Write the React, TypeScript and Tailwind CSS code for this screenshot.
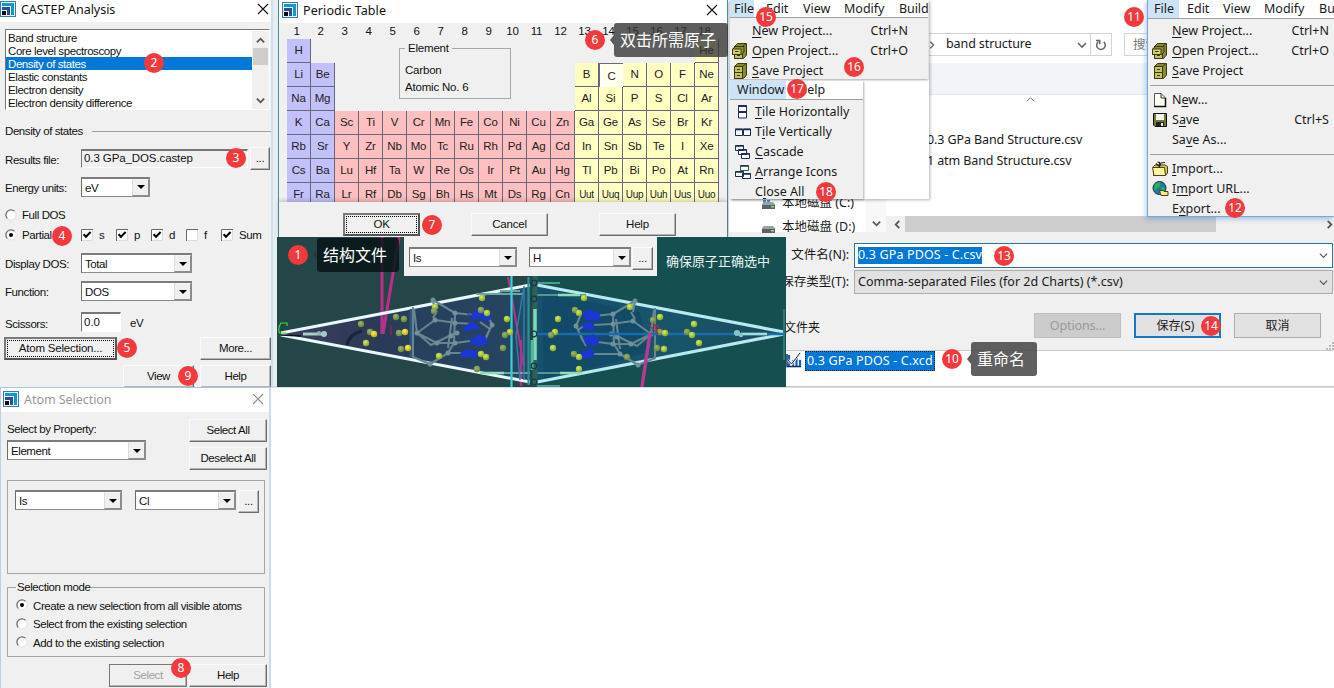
import React from "react";
import clsx from "clsx";

const UI = "font-[family-name:'Noto_Sans','Noto_Sans_CJK_SC',sans-serif]";
const CLASSIC = "font-[family-name:'Liberation_Sans','Noto_Sans_CJK_SC',sans-serif]";

function AppIcon() {
  return (
    <svg width="16" height="16" viewBox="0 0 16 16" className="shrink-0">
      <rect x="0.5" y="0.5" width="15" height="15" fill="#eaf4fa" stroke="#3a7ca5" />
      <path d="M2 2H14V14H11V5H2Z" fill="#1496cf" />
      <path d="M2 6H10V14H7V9H2Z" fill="#2b4f93" />
      <rect x="2" y="10" width="4" height="4" fill="#0a0a14" />
    </svg>
  );
}

function CloseIcon({ color }: { color: string }) {
  return (
    <svg width="12" height="12" viewBox="0 0 12 12" className="shrink-0">
      <path d="M1 1L11 11M11 1L1 11" stroke={color} strokeWidth="1.1" />
    </svg>
  );
}

function Chevron({ dir, color = "#555", size = 9, w = 1.6 }: { dir: "up" | "down" | "left" | "right"; color?: string; size?: number; w?: number }) {
  const d = { up: "M1 7L5 3L9 7", down: "M1 3L5 7L9 3", left: "M7 1L3 5L7 9", right: "M3 1L7 5L3 9" }[dir];
  return (
    <svg width={size} height={size} viewBox="0 0 10 10" className="shrink-0">
      <path d={d} fill="none" stroke={color} strokeWidth={w} />
    </svg>
  );
}

function Combo({ value, className }: { value: string; className: string }) {
  return (
    <div className={clsx("flex h-5 shrink-0 border border-t-2 border-[#8c8c8c] border-l-[#6c6c6c] border-t-[#7c7c7c] bg-white", className)}>
      <span className="min-w-0 flex-1 overflow-hidden pl-[3px] pt-px leading-4">{value}</span>
      <span className="flex w-[17px] items-center justify-center border border-b-[#8c8c8c] border-l-[#dcdcdc] border-r-[#8c8c8c] border-t-[#f4f4f4] bg-[#f0f0f0]">
        <svg width="8" height="4" viewBox="0 0 8 4">
          <path d="M0 0H8L4 4Z" fill="#000" />
        </svg>
      </span>
    </div>
  );
}

function Button({ children, className, focus = false, disabled = false }: { children: React.ReactNode; className: string; focus?: boolean; disabled?: boolean }) {
  return (
    <div
      className={clsx(
        "flex h-[23px] shrink-0 bg-[#f0f0f0]",
        focus
          ? "border-2 border-b-[#555] border-l-[#7a7a7a] border-r-[#555] border-t-[#7a7a7a] p-px"
          : "border p-0.5 shadow-[inset_-1px_-1px_0_#b4b4b4]",
        !focus && !disabled && "border-b-[#6c6c6c] border-l-[#fbfbfb] border-r-[#6c6c6c] border-t-[#fbfbfb]",
        disabled && "border-[#777] text-[#a0a0a0]",
        className,
      )}
    >
      <span className={clsx("flex flex-1 items-center justify-center whitespace-nowrap", focus && "border border-dotted border-black")}>{children}</span>
    </div>
  );
}

function Radio({ on = false }: { on?: boolean }) {
  return (
    <svg width="12" height="12" viewBox="0 0 12 12" className="shrink-0">
      <circle cx="6" cy="6" r="5" fill="#fff" />
      <path d="M2.4 9.6A5 5 0 0 1 9.6 2.4" fill="none" stroke="#6c6c6c" strokeWidth="1.3" />
      <path d="M9.6 2.4A5 5 0 0 1 2.4 9.6" fill="none" stroke="#e2e2e2" />
      {on && <circle cx="6" cy="6" r="2" fill="#000" />}
    </svg>
  );
}

function Check({ label, on = true, className }: { label: string; on?: boolean; className: string }) {
  return (
    <div className={clsx("flex shrink-0 items-center", className)}>
      <svg width="12" height="12" viewBox="0 0 12 12" className="shrink-0">
        <rect width="12" height="12" fill="#fff" />
        <path d="M0.5 12V0.5H12" fill="none" stroke="#6a6a6a" />
        <path d="M11.5 1V11.5H1" fill="none" stroke="#dcdcdc" />
        {on && <path d="M2.6 5.2L5 7.8L9.6 3" fill="none" stroke="#000" strokeWidth="2" />}
      </svg>
      <span className="pl-[6px]">{label}</span>
    </div>
  );
}

function Badge({ n, className }: { n: number; className: string }) {
  return (
    <div className={clsx("absolute flex size-5 items-center justify-center rounded-full bg-[#f23a3c] text-[12px] leading-none text-white", UI, className)}>
      {n}
    </div>
  );
}

function CastepWindow() {
  const items = ["Band structure", "Core level spectroscopy", "Density of states", "Elastic constants", "Electron density", "Electron density difference"];
  return (
    <section className={clsx("absolute left-0 top-0 flex h-[387px] w-[271px] flex-col bg-[#f0f0f0] text-[11.5px] leading-[13px] tracking-[-0.42px] text-[#111]", CLASSIC)}>
      <header className="flex h-[22px] shrink-0 items-center bg-white pb-1 pr-[2px]">
        <AppIcon />
        <span className={clsx("flex-1 pl-[5px] text-[12.5px] tracking-[-0.05px]", UI)}>CASTEP Analysis</span>
        <CloseIcon color="#111" />
      </header>
      <div className="ml-[5px] mt-[7px] flex h-[81px] w-[265px] border border-b-[#fff] border-l-[#777] border-r-[#fff] border-t-[#777] bg-white pt-px">
        <ul className="flex-1">
          {items.map((t) => (
            <li key={t} className={clsx("h-[13px] whitespace-nowrap pl-[2px] leading-[14px]", t === "Density of states" && "bg-[#0078d7] text-white")}>
              {t}
            </li>
          ))}
        </ul>
        <div className="flex w-[17px] flex-col items-center bg-[#f0f0f0] pt-[5px]">
          <Chevron dir="up" w={2} />
          <div className="mt-[3px] h-[17px] w-[15px] bg-[#cdcdcd]" />
          <div className="flex-1" />
          <Chevron dir="down" w={2} />
          <div className="h-1" />
        </div>
      </div>
      <div className="mt-[14px] flex h-4 items-center pl-[5px]">
        <span>Density of states</span>
        <div className="ml-[9px] h-px flex-1 bg-[#a0a0a0]" />
      </div>
      <div className="mt-[9px] flex h-5 items-center pl-[5px]">
        <span className="w-[76px] pt-[3px]">Results file:</span>
        <span className="h-[19px] w-[167px] border border-b-white border-l-[#777] border-r-white border-t-2 border-t-[#777] pl-[2px] pt-px tracking-[-0.1px]">0.3 GPa_DOS.castep</span>
        <Button className="ml-[2px] h-5 w-5">...</Button>
      </div>
      <div className="mt-[8px] flex h-5 items-center pl-[5px]">
        <span className="w-[76px] pt-[3px]">Energy units:</span>
        <Combo value="eV" className="w-[69px]" />
      </div>
      <div className="mt-[10px] flex h-4 items-center pl-[5px]">
        <Radio />
        <span className="pl-[5px] pt-px">Full DOS</span>
      </div>
      <div className="mt-[5px] flex h-4 items-center pl-[5px]">
        <Radio on />
        <span className="w-[64px] pl-[5px] pt-px">Partial</span>
        <Check label="s" className="w-[35px]" />
        <Check label="p" className="w-[35px]" />
        <Check label="d" className="w-[35px]" />
        <Check label="f" on={false} className="w-[35px]" />
        <Check label="Sum" className="w-[45px]" />
      </div>
      <div className="mt-[10px] flex h-5 items-center pl-[5px]">
        <span className="w-[76px] pt-[2px]">Display DOS:</span>
        <Combo value="Total" className="w-[111px]" />
      </div>
      <div className="mt-[8px] flex h-5 items-center pl-[5px]">
        <span className="w-[76px] pt-[2px]">Function:</span>
        <Combo value="DOS" className="w-[111px]" />
      </div>
      <div className="mt-[11px] flex h-5 items-center pl-[5px]">
        <span className="w-[76px] pt-1">Scissors:</span>
        <span className="h-5 w-10 border border-b-white border-l-[#777] border-r-white border-t-2 border-t-[#777] bg-white pl-0.5 pt-[2px] tracking-normal">0.0</span>
        <span className="pl-[9px] pt-0.5">eV</span>
      </div>
      <div className="mt-[5px] flex h-[22px] justify-between pl-1">
        <Button focus className="h-[22px] w-[113px] tracking-[-0.2px]">Atom Selection...</Button>
        <Button className="h-[22px] w-[71px]">More...</Button>
      </div>
      <div className="mt-[6px] flex h-[22px] justify-end gap-[6px]">
        <Button className="h-[22px] w-[71px]">View</Button>
        <Button className="h-[22px] w-[71px]">Help</Button>
      </div>
    </section>
  );
}

function AtomSelectionWindow() {
  const modes = ["Create a new selection from all visible atoms", "Select from the existing selection", "Add to the existing selection"];
  return (
    <section className={clsx("absolute left-0 top-[387px] flex h-[301px] w-[271px] flex-col border-l border-r-2 border-t border-l-[#b9cfe3] border-r-[#c9dced] border-t-[#a9c4dc] bg-[#f0f0f0] text-[11.5px] leading-[13px] tracking-[-0.42px] text-[#111]", CLASSIC)}>
      <header className="flex h-[24px] shrink-0 items-center bg-white pb-0.5 pl-[2px] pr-[5px]">
        <AppIcon />
        <span className={clsx("flex-1 pl-[5px] text-[12.5px] tracking-[-0.05px] text-[#999]", UI)}>Atom Selection</span>
        <CloseIcon color="#888" />
      </header>
      <div className="flex h-[68px] justify-between pl-[6px] pr-[2px] pt-[7px]">
        <div className="flex flex-col">
          <span className="pb-[4px] pt-[4px]">Select by Property:</span>
          <Combo value="Element" className="w-[139px]" />
        </div>
        <div className="flex flex-col gap-[5px]">
          <Button className="w-[78px]">Select All</Button>
          <Button className="w-[78px]">Deselect All</Button>
        </div>
      </div>
      <div className="ml-[6px] flex h-[94px] w-[258px] border border-[#a5a5a5] pl-[7px] pt-[9px]">
        <Combo value="Is" className="w-[107px]" />
        <Combo value="Cl" className="ml-[13px] w-[101px]" />
        <Button className="ml-[2px] h-[21px] w-[21px]">...</Button>
      </div>
      <fieldset className="ml-[6px] mt-[7px] flex h-[76px] w-[258px] flex-col border border-[#a5a5a5] pl-[8px]">
        <legend className="px-[1px]">Selection mode</legend>
        {modes.map((m, i) => (
          <label key={m} className="flex h-[18.5px] items-center whitespace-nowrap pt-[4px]">
            <Radio on={i === 0} />
            <span className="pl-[5px] pt-[2px]">{m}</span>
          </label>
        ))}
      </fieldset>
      <div className="mt-[7px] flex justify-end gap-[2px] pr-[2px]">
        <Button disabled className="w-[78px]">Select</Button>
        <Button className="w-[78px]">Help</Button>
      </div>
    </section>
  );
}

const ROWS: [number, string[]][] = [
  [1, ["H"]],
  [2, ["Li", "Be"]],
  [3, ["Na", "Mg"]],
  [4, "K Ca Sc Ti V Cr Mn Fe Co Ni Cu Zn Ga Ge As Se Br Kr".split(" ")],
  [5, "Rb Sr Y Zr Nb Mo Tc Ru Rh Pd Ag Cd In Sn Sb Te I Xe".split(" ")],
  [6, "Cs Ba Lu Hf Ta W Re Os Ir Pt Au Hg Tl Pb Bi Po At Rn".split(" ")],
  [7, "Fr Ra Lr Rf Db Sg Bh Hs Mt Ds Rg Cn Uut Uuq Uup Uuh Uus Uuo".split(" ")],
];
const RIGHT: [number, number, string[]][] = [
  [1, 18, ["He"]],
  [2, 13, "B C N O F Ne".split(" ")],
  [3, 13, "Al Si P S Cl Ar".split(" ")],
];

function Cell({ s, col, row }: { s: string; col: number; row: number }) {
  const kind = col <= 2 ? "bg-[#c3c1fb]" : col <= 12 ? "bg-[#fdbfc0]" : s === "C" ? "bg-[#fffff0]" : "bg-[#ffffc2]";
  return (
    <div
      style={{ gridColumn: col, gridRow: row }}
      className={clsx(
        "flex items-center justify-center text-[#221c24]",
        kind,
        s === "C" ? "border-l border-t border-[#686878] pt-px" : "border-b border-r border-[#686878]",
        s.length === 3 ? "text-[10px] tracking-[-0.3px]" : "text-[11.5px]",
      )}
    >
      {s}
    </div>
  );
}

function PeriodicWindow() {
  return (
    <section className={clsx("absolute left-[278px] top-0 flex h-[237px] w-[450px] flex-col border-l border-r border-[#4b8c94] bg-[#f0f0f0] text-[11.5px] leading-[13px] tracking-[-0.2px] text-[#111]", CLASSIC)}>
      <header className="flex h-[23px] shrink-0 items-center bg-white pb-[3px] pl-[3px] pr-[9px]">
        <AppIcon />
        <span className={clsx("flex-1 pl-[5px] text-[12.5px] tracking-[0.1px]", UI)}>Periodic Table</span>
        <CloseIcon color="#111" />
      </header>
      <div className="h-[179px] overflow-hidden pl-[8px]">
        <div className="flex h-4">
          {Array.from({ length: 18 }, (_, i) => (
            <span key={i} className="w-6 pr-[5px] pt-[2px] text-center">{i + 1}</span>
          ))}
        </div>
        <div className="grid grid-cols-[repeat(18,24px)] grid-rows-[repeat(7,24px)]">
          {ROWS.flatMap(([r, list]) => list.map((s, i) => <Cell key={s} s={s} col={i + 1} row={r} />))}
          {RIGHT.flatMap(([r, c, list]) => list.map((s, i) => <Cell key={s} s={s} col={c + i} row={r} />))}
          <fieldset className="col-span-6 col-start-5 row-span-3 row-start-1 ml-4 mt-[3px] h-[57px] w-[112px] border border-[#a8a8a8] pl-[5px]">
            <legend className="px-[3px]">Element</legend>
            <p className="pt-[9px]">Carbon</p>
            <p className="pt-1">Atomic No. 6</p>
          </fieldset>
        </div>
      </div>
      <footer className="flex h-[35px] gap-[51px] bg-[#f0f0f0] pl-[64px] pt-[11px] shadow-[0_-2px_4px_rgba(0,0,0,0.18)]">
        <Button focus className="w-[77px]">OK</Button>
        <Button className="w-[77px]">Cancel</Button>
        <Button className="w-[77px]">Help</Button>
      </footer>
    </section>
  );
}

const ATOMS_L = [[361, 324], [370, 332], [374, 334], [366, 343], [396, 317], [404, 319], [399, 333], [405, 332], [401, 349], [408, 348], [435, 307], [434, 311], [439, 356], [482, 298], [481, 310], [487, 313], [507, 319], [510, 332], [505, 335], [503, 348], [481, 354], [486, 357], [477, 369]];
const ATOMS_R = [[584, 298], [575, 310], [579, 313], [558, 319], [555, 332], [551, 335], [553, 348], [574, 354], [579, 357], [579, 369], [630, 307], [653, 320], [660, 317], [660, 332], [665, 333], [657, 348], [664, 349], [694, 324], [687, 332], [692, 335], [699, 343], [627, 357]];
const JOINTS = [[433, 300], [455, 313], [435, 320], [455, 323], [437, 343], [455, 343], [430, 364], [448, 353], [417, 333], [492, 325], [457, 333], [451, 336]];

function BondCage() {
  return (
    <g>
      <g fill="none" stroke="#66858f" strokeWidth="2.1" strokeLinejoin="round">
        <path d="M413 307V357L430 364L448 353H466L475 353" />
        <path d="M433 300L435 311M433 300L455 313L474 315M455 313L454 343L448 353" />
        <path d="M414 309L417 333L435 320L457 323L474 324" />
        <path d="M417 333L431 345L455 333M417 333L437 343L455 343L470 341" />
        <path d="M437 311L433 318M452 318L448 348M487 313L492 325L482 345M480 322L490 329L485 340" />
      </g>
      {JOINTS.map(([x, y], i) => (
        <circle key={i} cx={x} cy={y} r="2.5" fill="#71919a" />
      ))}
    </g>
  );
}

function StructureView() {
  return (
    <section className={clsx("absolute left-[277px] top-[237px] h-[150px] w-[509px] overflow-hidden", CLASSIC)}>
      <svg width="509" height="150" viewBox="277 237 509 150" className="absolute inset-0">
        <defs>
          <linearGradient id="inL" x1="0" x2="1">
            <stop offset="0" stopColor="#3d3d5a" />
            <stop offset="0.4" stopColor="#2a3a58" />
            <stop offset="1" stopColor="#244d66" />
          </linearGradient>
          <linearGradient id="inR" x1="0" x2="1">
            <stop offset="0" stopColor="#17506c" />
            <stop offset="0.5" stopColor="#17556c" />
            <stop offset="1" stopColor="#1c4c58" />
          </linearGradient>
          <radialGradient id="lime" cx="0.4" cy="0.35" r="0.65">
            <stop offset="0" stopColor="#d6ee5a" />
            <stop offset="1" stopColor="#86a82c" />
          </radialGradient>
          <radialGradient id="dim" cx="0.4" cy="0.35" r="0.65">
            <stop offset="0" stopColor="#9fb95a" />
            <stop offset="1" stopColor="#66834a" />
          </radialGradient>
          <radialGradient id="gold" cx="0.4" cy="0.35" r="0.65">
            <stop offset="0" stopColor="#fff04a" />
            <stop offset="1" stopColor="#bfae1c" />
          </radialGradient>
        </defs>
        <rect x="277" y="237" width="258" height="150" fill="#244648" />
        <rect x="535" y="237" width="251" height="150" fill="#164f50" />
        <path d="M281 332L530 285V383Z" fill="url(#inL)" />
        <path d="M784 333L536 285V383Z" fill="url(#inR)" />
        <path d="M413 309L470 299L520 288V378L470 366L413 355Z" fill="#27415f" opacity="0.6" />
        <path d="M542 292L580 300L640 312L648 352L600 366L544 378Z" fill="#114765" opacity="0.7" />
        <path d="M347 345Q349 334 362 331" stroke="#1b2336" strokeWidth="3" fill="none" />
        <g strokeWidth="3" stroke="#b83186" fill="none">
          <path d="M382 237V334M399 237L383 334" />
          <path d="M508 277L524 366" strokeWidth="2" />
          <path d="M521 340V386" strokeWidth="2.4" />
        </g>
        <path d="M391 325V335" stroke="#8c2a4c" strokeWidth="1.4" />
        <path d="M281 333L530 285M281 335L530 382" stroke="#eaf7fb" strokeWidth="3" />
        <path d="M784 332L537 285M784 334L537 382" stroke="#b9eaf2" strokeWidth="3.2" />
        <path d="M411 309V357" stroke="#2c5680" strokeWidth="3" />
        <BondCage />
        <g transform="translate(1068 1) scale(-1 1)">
          <BondCage />
        </g>
        <path d="M535 334H784" stroke="#1a6ab0" strokeWidth="2.6" />
        <g fill="#1c36d2">
          <path d="M466 313L471 315L476 310L485 310L492 318L488 322L480 318L474 320Z" />
          <path d="M463 328L470 322L478 324L479 331L474 329L466 332Z" />
          <path d="M468 337L473 339L478 334L486 337L488 344L480 346L472 344Z" />
          <path d="M460 353L466 349L478 351L476 358L468 357L462 358Z" />
          <path d="M582 313L590 309L600 314L599 321L586 320Z" />
          <path d="M582 324L590 321L595 326L592 331L583 329Z" />
          <path d="M583 338L593 334L600 340L596 346L586 345Z" />
          <path d="M580 353L590 348L595 353L591 358L581 358Z" />
        </g>
        <path d="M303 334H324" stroke="#a5cfc7" strokeWidth="3" />
        <circle cx="324" cy="334" r="3" fill="#a8c8c2" />
        <circle cx="319" cy="333" r="2" fill="#8eb3ad" />
        <path d="M287 326V323H281Q277.500 328 279.500 333H286" fill="none" stroke="#2fe02f" strokeWidth="1.2" />
        <path d="M281 335L301 336" stroke="#111" strokeWidth="1.4" />
        <path d="M476 294H524M480 373H530M500 291H520" stroke="#6da59c" strokeWidth="1.8" />
        <path d="M535 283H560M537 295H586M537 386H560M537 373H582" stroke="#4e9990" strokeWidth="1.8" />
        <path d="M558 295H580M560 373H582M480 373H504" stroke="#8be0b8" strokeWidth="2.4" />
        <path d="M511.5 237V387" stroke="#2fd3da" strokeWidth="2.2" />
        <path d="M524 286L516 335L520 380M524 286V380" stroke="#2684b0" strokeWidth="1.4" fill="none" />
        <path d="M528.5 277V385" stroke="#2b8f98" strokeWidth="2.2" />
        <path d="M535 276V386" stroke="#2a625d" strokeWidth="5" />
        <path d="M535 309V360" stroke="#7fd8bc" strokeWidth="3.5" />
        <path d="M532 340V370" stroke="#4fb69d" strokeWidth="3" />
        {[283, 299, 334, 366, 382].map((y) => (
          <circle key={y} cx="534" cy={y} r="2.8" fill="none" stroke="#183c44" strokeWidth="1.3" />
        ))}
        <path d="M741 334H767" stroke="#9fe0dc" strokeWidth="2.6" />
        <circle cx="737" cy="333" r="3" fill="#86c6c8" />
        <circle cx="741" cy="335" r="2.200" fill="#86c6c8" />
        {ATOMS_L.map(([x, y], i) => (
          <circle key={i} cx={x} cy={y} r="3.2" fill={[2, 7, 9].includes(i) ? "url(#gold)" : [0, 1, 4, 5, 6, 8, 11, 14, 18, 19, 22].includes(i) ? "url(#dim)" : "url(#lime)"} />
        ))}
        {ATOMS_R.map(([x, y], i) => (
          <circle key={i} cx={x} cy={y} r="3.2" fill={[1, 5, 7, 11, 13, 15, 18, 21].includes(i) ? "url(#dim)" : "url(#lime)"} />
        ))}
        <path d="M650 333L642 387" stroke="#bd3795" strokeWidth="3.4" />
        <path d="M649 325L658 334L654 324L663 330" stroke="#a0304a" strokeWidth="1.2" fill="none" />
        <path d="M784 309V360" stroke="#2d7a78" strokeWidth="2" />
      </svg>
      <div className="absolute left-[127px] top-0 flex h-[39px] w-[253px] bg-[#f0f0f0] pl-[5px] pt-[10px] text-[11.5px] tracking-[-0.35px] text-[#111]">
        <Combo value="Is" className="w-[108px]" />
        <Combo value="H" className="ml-3 w-[102px]" />
        <Button className="ml-[1px] h-[21px] w-[21px]">...</Button>
      </div>
      <p className={clsx("absolute left-[389px] top-[14px] whitespace-nowrap text-[13px] leading-[20px] text-[#e8f6f6]", UI)}>确保原子正确选中</p>
    </section>
  );
}

function CabinetIcon({ open = false }: { open?: boolean }) {
  return (
    <svg width="16" height="16" viewBox="0 0 16 16">
      <path d="M2.500 3.500L5.500 .5H14.500V12L11.500 15.500H2.500Z" fill="#8a8a35" stroke="#3a3a12" />
      <path d="M2.500 3.500H10.500V15.500H2.500ZM10.500 3.500L14 .5" fill="#c2c25e" stroke="#3a3a12" />
      <path d="M3 9.500H10M5 6.500H8M5 12.500H8" stroke="#3a3a12" />
      {open && (
        <>
          <path d="M.5 6L3.500 3.500H12V9L9.500 11.500H.5Z" fill="#8a8a35" stroke="#3a3a12" />
          <path d="M.5 6H9V11.500H.5Z" fill="#d0d06c" stroke="#3a3a12" />
          <path d="M3 8.500H6.500" stroke="#3a3a12" />
        </>
      )}
    </svg>
  );
}

const stroke = "#1c2c5a";
const icons: Record<string, React.ReactNode> = {
  open: <CabinetIcon open />,
  save: <CabinetIcon />,
  page: (
    <svg width="16" height="16" viewBox="0 0 16 16">
      <path d="M2.500 1.500H9L13.500 6V14.500H2.500Z" fill="#fffff0" stroke="#555" />
      <path d="M9 1.500V6H13.500" fill="none" stroke="#333" />
      <path d="M13.500 6V14.500H2" fill="none" stroke="#111" strokeWidth="1.500" />
    </svg>
  ),
  disk: (
    <svg width="16" height="16" viewBox="0 0 16 16">
      <path d="M1.500 1.500H14.500V14.500H3L1.500 13Z" fill="#77773b" stroke="#111" />
      <path d="M4 2H12V8H4Z" fill="#f4f4ea" />
      <path d="M4 10H12V14H4Z" fill="#222" />
      <path d="M9 11H11V14H9Z" fill="#eee" />
    </svg>
  ),
  folder: (
    <svg width="17" height="16" viewBox="0 0 17 16">
      <path d="M1.500 5.500L3 4H13L15.500 5.500V12L13.500 14.500H1.500Z" fill="#d6c85c" stroke="#4a4310" />
      <path d="M.5 6.500H12.500L13.500 14.500H2Z" fill="#fff3a0" stroke="#4a4310" />
      <path d="M4 2.500L7.500 5.500L9 2L13 1.500M7.500 5.500V1.500L5.500 1" fill="none" stroke="#222" strokeWidth="1.100" />
    </svg>
  ),
  globe: (
    <svg width="17" height="16" viewBox="0 0 17 16">
      <circle cx="7.500" cy="7" r="6.500" fill="#1b79ad" stroke="#12344a" />
      <path d="M3 3Q7 0 9 3Q8 6 5 7Q4 11 2 8ZM9 6Q13 5 13 8L10 10Z" fill="#2fb14b" />
      <path d="M7.500 9.500H11L12 10.500H16V14.500H9Z" fill="#f7ec82" stroke="#4a4310" />
    </svg>
  ),
  tileH: (
    <svg width="16" height="16" viewBox="0 0 16 16">
      <path d="M3.500 1.500H11.500V7.500H3.500ZM3.500 7.500H11.500V14H3.500Z" fill="#fff" stroke={stroke} />
      <path d="M3.500 2H11.500M3.500 8H11.500" stroke={stroke} strokeWidth="2" />
    </svg>
  ),
  tileV: (
    <svg width="16" height="16" viewBox="0 0 16 16">
      <path d="M.5 5H7.500V11.500H.5ZM8.500 5H15.500V11.500H8.500Z" fill="#fff" stroke={stroke} />
      <path d="M0 5.500H16" stroke={stroke} strokeWidth="1.600" />
    </svg>
  ),
  cascade: (
    <svg width="16" height="16" viewBox="0 0 16 16">
      <path d="M.5 1.500H8.500V6.500H.5ZM3.500 5.500H11.500V10.500H3.500ZM6.500 9.500H14.500V14.500H6.500Z" fill="#fff" stroke={stroke} />
      <path d="M.5 2H8.500M3.500 6H11.500M6.500 10H14.500" stroke={stroke} strokeWidth="1.600" />
    </svg>
  ),
  arrange: (
    <svg width="16" height="16" viewBox="0 0 16 16">
      <path d="M5.500 1.500H13.500V6.500H5.500Z" fill="#fff" stroke="#236b35" />
      <path d="M.5 7.500H8.500V12.500H.5ZM7.500 9.500H15.500V14.500H7.500Z" fill="#fff" stroke={stroke} />
      <path d="M.5 8H8.500M7.500 10H15.500M5.500 2H13.500" stroke={stroke} strokeWidth="1.400" />
    </svg>
  ),
};

function MenuItem({ icon, label, u = -1, keys }: { icon?: string; label: string; u?: number; keys?: string }) {
  return (
    <li className="flex h-5 items-center whitespace-nowrap">
      <span className="flex w-5 shrink-0">{icon && icons[icon]}</span>
      <span className="flex-1 leading-5">
        {u >= 0 ? (
          <>
            {label.slice(0, u)}
            <u className="underline-offset-2">{label[u]}</u>
            {label.slice(u + 1)}
          </>
        ) : (
          label
        )}
      </span>
      <span>{keys}</span>
    </li>
  );
}

function ProjectMenu() {
  return (
    <section className={clsx("absolute left-[730px] top-0 h-[199px] w-[199px] bg-white text-[12.5px] text-[#1a1a1a] shadow-[1px_1px_3px_rgba(0,0,0,0.3)]", UI)}>
      <div className="h-[79px] w-[198px] bg-[#f0f0f0] shadow-[0_1px_2px_rgba(0,0,0,0.35)]">
        <div className="flex h-[18px] overflow-hidden whitespace-nowrap border-b border-[#a0a0a0] bg-white leading-[17px]">
          <span className="w-[24px] shrink-0 bg-[#cce4f7] pl-1">File</span>
          <span className="w-[42px] shrink-0 pl-[12px]">Edit</span>
          <span className="w-[48px] shrink-0 pl-[7px]">View</span>
          <span className="w-[54px] shrink-0">Modify</span>
          <span className="pl-px tracking-[-0.1px]">Build</span>
        </div>
        <ul className="pl-[2px] pr-5 pt-[3px]">
          <MenuItem label="New Project..." u={0} keys="Ctrl+N" />
          <MenuItem icon="open" label="Open Project..." u={0} keys="Ctrl+O" />
          <MenuItem icon="save" label="Save Project" u={0} />
        </ul>
      </div>
      <div className="mt-[2px] h-[118px] w-[133px] overflow-hidden bg-[#f0f0f0] shadow-[1px_1px_2px_rgba(0,0,0,0.3)]">
        <div className="flex h-[19px] border-b border-[#a0a0a0] bg-white leading-[17px]">
          <span className="w-[56px] bg-[#cce4f7] pl-[7px]">Window</span>
          <span className="pl-[12px]">Help</span>
        </div>
        <ul className="pl-[5px] pt-[2px]">
          <MenuItem icon="tileH" label="Tile Horizontally" u={0} />
          <MenuItem icon="tileV" label="Tile Vertically" u={1} />
          <MenuItem icon="cascade" label="Cascade" u={0} />
          <MenuItem icon="arrange" label="Arrange Icons" u={0} />
          <MenuItem label="Close All" u={1} />
        </ul>
      </div>
    </section>
  );
}

function FileMenu() {
  return (
    <section className={clsx("absolute left-[1147px] top-0 h-[217px] w-[187px] overflow-hidden border-b border-l border-[#7da7cf] bg-[#f0f0f0] text-[12.5px] text-[#1a1a1a] shadow-[-1px_2px_5px_rgba(60,130,220,0.45)]", UI)}>
      <div className="flex h-[19px] overflow-hidden whitespace-nowrap border-b border-[#a0a0a0] bg-white leading-[17px]">
        <span className="w-[31px] shrink-0 bg-[#cce4f7] pl-[6px]">File</span>
        <span className="w-[36px] shrink-0 pl-[8px]">Edit</span>
        <span className="w-[49px] shrink-0 pl-[8px]">View</span>
        <span className="w-[55px] shrink-0">Modify</span>
        <span>Bu</span>
      </div>
      <ul className="pl-1 pr-[5px] pt-[2px]">
        <MenuItem label="New Project..." u={0} keys="Ctrl+N" />
        <MenuItem icon="open" label="Open Project..." u={0} keys="Ctrl+O" />
        <MenuItem icon="save" label="Save Project" u={0} />
        <li className="my-1 -ml-0.5 -mr-[5px] h-px bg-[#a0a0a0]" />
        <MenuItem icon="page" label="New..." u={1} />
        <MenuItem icon="disk" label="Save" u={1} keys="Ctrl+S" />
        <MenuItem label="Save As..." u={2} />
        <li className="my-1 -ml-0.5 -mr-[5px] h-px bg-[#a0a0a0]" />
        <MenuItem icon="folder" label="Import..." u={0} />
        <MenuItem icon="globe" label="Import URL..." u={1} />
        <MenuItem label="Export..." u={1} />
      </ul>
    </section>
  );
}

function Drive({ label, windows = false }: { label: string; windows?: boolean }) {
  return (
    <div className="flex h-[24px] items-center pl-[33px] leading-6">
      <svg width="20" height="16" viewBox="0 0 20 16" className="shrink-0">
        {windows && <path d="M1 1H4V4H1ZM5 1H8V4H5ZM1 5H4V8H1ZM5 5H8V8H5Z" fill="#25a7dc" />}
        <path d="M0 9L2 7H11L13 9V14H0Z" fill="#9ba1a5" />
        <path d="M0 10H13V14H0Z" fill="#5c6165" />
        <rect x="9" y="11" width="3" height="1.500" fill="#7ce07c" />
      </svg>
      <span>{label}</span>
    </div>
  );
}

function SaveDialog() {
  return (
    <section className={clsx("absolute left-[729px] top-0 flex h-[350px] w-[605px] flex-col bg-[#f0f0f0] text-[12.5px] text-[#1a1a1a] shadow-[0_1px_3px_rgba(0,0,0,0.35)]", UI)}>
      <div className="flex h-[63px] items-start bg-white pl-[190px] pt-[33px]">
        <div className="flex h-[23px] w-[193px] items-center border border-[#d4d4d4] pl-2">
          <Chevron dir="right" color="#666" size={8} />
          <span className="flex-1 pl-[10px] tracking-[-0.1px]">band structure</span>
          <Chevron dir="down" color="#666" size={10} />
          <span className="ml-[3px] flex h-full w-[21px] items-center justify-center border-l border-[#d4d4d4]">
            <svg width="12" height="12" viewBox="0 0 12 12">
              <path d="M3.500 2.600A4.300 4.300 0 1 0 8.800 2.900" fill="none" stroke="#666" strokeWidth="1.500" />
              <path d="M1 1.500H4.800V5.300" fill="none" stroke="#666" strokeWidth="1.400" />
            </svg>
          </span>
        </div>
        <div className="ml-[12px] h-[23px] flex-1 border border-[#d4d4d4] pl-[8px] leading-[21px] text-[#777]">搜索</div>
      </div>
      <div className="h-[32px] shrink-0 border-b border-[#dfe5ec] bg-[#f1f4f8]" />
      <div className="flex h-[137px] shrink-0">
        <div className="flex w-[157px] bg-white">
          <div className="flex flex-1 flex-col pt-[96px]">
            <Drive label="本地磁盘 (C:)" windows />
            <Drive label="本地磁盘 (D:)" />
          </div>
          <div className="flex w-[20px] flex-col items-center justify-end bg-[#f8f8f8] pb-1">
            <Chevron dir="down" w={2} />
          </div>
        </div>
        <div className="flex flex-1 flex-col">
          <div className="h-[121px] bg-white pl-[41px]">
            <div className="flex h-[4px] pl-[99px]">
              <Chevron dir="up" color="#666" w={1} />
            </div>
            <p className="pt-[30px] leading-[21px] tracking-[-0.1px]">0.3 GPa Band Structure.csv</p>
            <p className="leading-[21px] tracking-[-0.1px]">1 atm Band Structure.csv</p>
          </div>
          <div className="flex h-4 shrink-0 items-center justify-between pl-[7px]">
            <Chevron dir="left" w={2} />
            <div className="ml-[3px] h-full w-[311px] bg-[#cdcdcd]" />
            <div className="flex-1" />
            <Chevron dir="right" w={2} />
          </div>
        </div>
      </div>
      <div className="mt-[11px] flex h-[25px] items-center pr-px">
        <span className="w-[125px] pr-[5px] text-right">文件名(N):</span>
        <div className="flex h-full flex-1 items-center border border-[#24789a] bg-white pl-[3px] pr-1">
          <span className="h-[17px] bg-[#0078d7] leading-[16px] tracking-[0.14px] text-white">0.3 GPa PDOS - C.csv</span>
          <span className="flex-1" />
          <Chevron dir="down" w={1.3} />
        </div>
      </div>
      <div className="mt-[2px] flex h-[24px] items-center pr-px">
        <span className="w-[125px] whitespace-nowrap pr-[5px] text-right">保存类型(T):</span>
        <div className="flex h-full flex-1 items-center border border-[#acacac] bg-[#e1e1e1] pl-[3px] pr-1">
          <span className="flex-1 pt-px">Comma-separated Files (for 2d Charts) (*.csv)</span>
          <Chevron dir="down" w={1.3} />
        </div>
      </div>
      <div className="mt-[19px] flex h-[25px] items-center gap-[13px] pr-[13px]">
        <span className="flex-1 pl-[55px] pt-1 text-[12px]">文件夹</span>
        <span className="flex h-full w-[87px] items-center justify-center border border-[#bfbfbf] bg-[#cccccc] pt-px tracking-[-0.1px] text-[#9a9a9a]">Options...</span>
        <span className="flex h-full w-[87px] items-center justify-center border-2 border-[#1478c4] bg-[#e1e1e1] pr-1 text-[12px]">保存(S)</span>
        <span className="flex h-full w-[87px] items-center justify-center border border-[#adadad] bg-[#e1e1e1] text-[12px]">取消</span>
      </div>
      <div className="flex flex-1 items-end justify-end">
        <svg width="8" height="8" viewBox="0 0 8 8">
          <path d="M6 0H8V2H6ZM3 3H5V5H3ZM6 3H8V5H6ZM0 6H2V8H0ZM3 6H5V8H3ZM6 6H8V8H6Z" fill="#bdbdbd" />
        </svg>
      </div>
    </section>
  );
}

function ResultFile() {
  return (
    <section className={clsx("absolute left-[785px] top-[351px] flex h-[36px] w-[549px] items-start border-b border-[#c8c8c8] bg-white text-[12.5px]", UI)}>
      <svg width="17" height="17" viewBox="0 0 17 17">
        <rect width="17" height="17" fill="#f2f7fd" />
        <path d="M2 3V15.500H16" stroke="#102c5c" fill="none" strokeWidth="1.500" />
        <path d="M4 4V15M8 9V15M11.500 7V15M15 9V15" stroke="#1d5fae" strokeWidth="2.200" />
        <path d="M3 9L6.500 13L15 2" stroke="#f2f7fd" fill="none" strokeWidth="2.400" />
        <path d="M3 9L6.500 13L15 2" stroke="#222" fill="none" />
      </svg>
      <span className="ml-[3px] h-[20px] whitespace-nowrap border border-dotted border-[#222] bg-[#0078d7] px-px leading-[17px] tracking-[0.14px] text-white">0.3 GPa PDOS - C.xcd</span>
    </section>
  );
}

function Tip({ children, className }: { children: string; className: string }) {
  return (
    <div className={clsx("absolute flex h-[34px] items-center whitespace-nowrap rounded-[3px] pl-[6px] text-[16px] text-white", UI, className)}>
      <span className="absolute -left-1 top-3 border-y-[5px] border-r-4 border-y-transparent border-r-[#333]/80" />
      {children}
    </div>
  );
}

export default function App() {
  return (
    <main className="relative h-[688px] w-[1334px] overflow-hidden bg-white">
      <div className="absolute left-[271px] top-0 h-[387px] w-[8px] border-l-2 border-[#cfdfeb] bg-[#e6edf0]" />
      <div className="absolute left-0 top-[386px] h-[2px] w-full bg-[#d8dde2]" />
      <SaveDialog />
      <ResultFile />
      <ProjectMenu />
      <FileMenu />
      <PeriodicWindow />
      <StructureView />
      <CastepWindow />
      <AtomSelectionWindow />
      <Tip className="left-[317px] top-[238px] w-[82px] bg-[#081517]/85">结构文件</Tip>
      <Tip className="left-[614px] top-[23px] w-[114px] bg-[#333]/78">双击所需原子</Tip>
      <Tip className="left-[971px] top-[342px] w-[66px] bg-[#444]/85">重命名</Tip>
      <Badge n={1} className="left-[288px] top-[245px]" />
      <Badge n={2} className="left-[144px] top-[53px]" />
      <Badge n={3} className="left-[226px] top-[148px]" />
      <Badge n={4} className="left-[52px] top-[226px]" />
      <Badge n={5} className="left-[117px] top-[338px]" />
      <Badge n={6} className="left-[585px] top-[30px]" />
      <Badge n={7} className="left-[422px] top-[215px]" />
      <Badge n={8} className="left-[171px] top-[658px]" />
      <Badge n={9} className="left-[178px] top-[366px]" />
      <Badge n={10} className="left-[942px] top-[349px]" />
      <Badge n={11} className="left-[1124px] top-[7px]" />
      <Badge n={12} className="left-[1225px] top-[198px]" />
      <Badge n={13} className="left-[994px] top-[246px]" />
      <Badge n={14} className="left-[1201px] top-[316px]" />
      <Badge n={15} className="left-[756px] top-[7px]" />
      <Badge n={16} className="left-[844px] top-[57px]" />
      <Badge n={17} className="left-[787px] top-[79px]" />
      <Badge n={18} className="left-[816px] top-[182px]" />
    </main>
  );
}
